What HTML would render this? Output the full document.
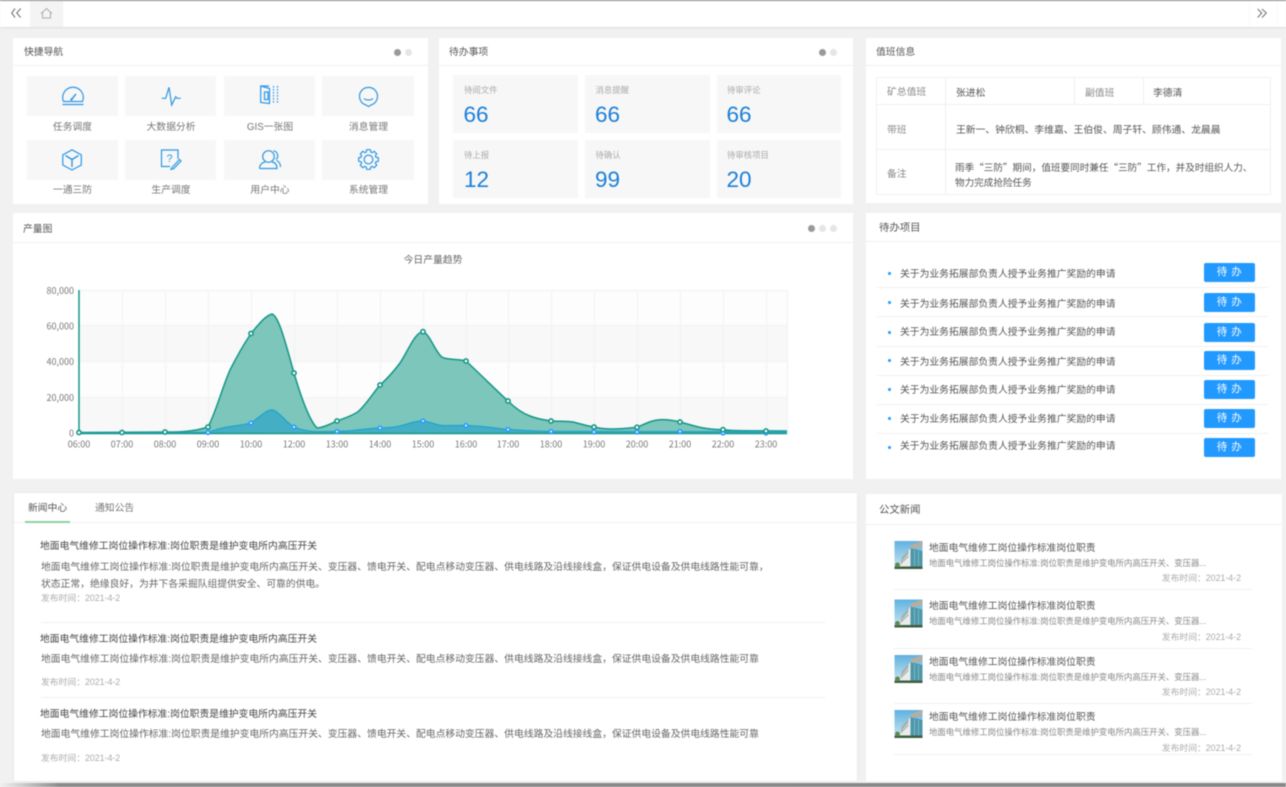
<!DOCTYPE html>
<html lang="zh-CN">
<head>
<meta charset="utf-8">
<title>Dashboard</title>
<style>
html,body{margin:0;padding:0;width:1286px;height:787px;overflow:hidden;background:#f1f1f1}
#root{position:absolute;left:0;top:0;width:1286px;height:787px;overflow:hidden;background:#f1f1f1;filter:blur(.5px);font-family:"Liberation Sans","Noto Sans CJK SC",sans-serif;color:#555}
.b{position:absolute;background:#fff}
.r{position:absolute;background:#f7f7f7}
.l{position:absolute;height:1px;background:#f0f0f0}
.t{position:absolute;white-space:nowrap;line-height:14px;height:14px;font-size:9.8px;color:#555;margin-top:2px}
.c{transform:translateX(-50%)}
.g{color:#aaa;font-size:8.8px;margin-top:0}
.d{position:absolute;width:7px;height:7px;border-radius:50%;background:#e5e5e5}
.d.on{background:#999}
.n{position:absolute;font-size:22.5px;line-height:28px;color:#1a7fd6;font-family:"Liberation Sans",sans-serif}
.btn{position:absolute;left:1204px;width:51px;height:19px;line-height:19px;background:#2299ff;border-radius:2px;color:#fff;text-align:center;font-size:10.5px;letter-spacing:.5px}
.dot{position:absolute;left:888px;width:3px;height:3px;border-radius:50%;background:#2299ff}
svg{position:absolute;left:0;top:0;overflow:visible}
</style>
</head>
<body>
<div id="root">

<!-- top bar -->
<div class="b" style="left:0;top:0;width:1286px;height:27px;box-shadow:0 1px 2px rgba(0,0,0,.08)"></div>
<div style="position:absolute;left:0;top:0;width:1286px;height:1px;background:#8a8a8a"></div>
<div style="position:absolute;left:30px;top:1px;width:33px;height:26px;background:#f4f4f4"></div>
<div style="position:absolute;left:1249px;top:1px;width:1px;height:26px;background:#f8f8f8"></div>
<div style="position:absolute;left:1277px;top:1px;width:1px;height:26px;background:#f8f8f8"></div>

<!-- cards -->
<div class="b" style="left:13px;top:38px;width:415px;height:166px"></div>
<div class="b" style="left:439px;top:38px;width:414px;height:166px"></div>
<div class="b" style="left:866px;top:38px;width:415px;height:165px"></div>
<div class="b" style="left:13px;top:213px;width:840px;height:266px"></div>
<div class="b" style="left:866px;top:213px;width:415px;height:266px"></div>
<div class="b" style="left:14px;top:493px;width:843px;height:288px;box-shadow:0 0 3px rgba(0,0,0,.06)"></div>
<div class="b" style="left:866px;top:494px;width:416px;height:287px"></div>

<!-- bottom strip -->
<div style="position:absolute;left:0;top:783px;width:1286px;height:4px;background:linear-gradient(90deg,#f1f1f1 0,#c8c8c8 25px,#8a8a8a 60px,#888 100%)"></div>

<!-- card headers -->
<div class="l" style="left:13px;top:65px;width:415px"></div>
<div class="l" style="left:439px;top:65px;width:414px"></div>
<div class="l" style="left:866px;top:65px;width:415px"></div>
<div class="l" style="left:13px;top:242px;width:840px"></div>
<div class="l" style="left:866px;top:241px;width:415px"></div>
<div class="l" style="left:14px;top:522px;width:843px"></div>
<div class="l" style="left:866px;top:524px;width:416px"></div>

<div class="t" style="left:24px;top:44px">快捷导航</div>
<div class="t" style="left:449px;top:44px">待办事项</div>
<div class="t" style="left:876px;top:44px">值班信息</div>
<div class="t" style="left:23px;top:221px">产量图</div>
<div class="t" style="left:879px;top:220px;font-size:10.4px">待办项目</div>
<div class="t" style="left:879px;top:502px;font-size:10.4px">公文新闻</div>

<div class="d on" style="left:394px;top:49px"></div><div class="d" style="left:405px;top:49px"></div>
<div class="d on" style="left:819px;top:49px"></div><div class="d" style="left:830px;top:49px"></div>
<div class="d on" style="left:808px;top:225px"></div><div class="d" style="left:819px;top:225px"></div><div class="d" style="left:830px;top:225px"></div>

<!-- nav tiles -->
<div class="r" style="left:27px;top:76px;width:91px;height:40px"></div>
<div class="r" style="left:125px;top:76px;width:91px;height:40px"></div>
<div class="r" style="left:224px;top:76px;width:91px;height:40px"></div>
<div class="r" style="left:322px;top:76px;width:92px;height:40px"></div>
<div class="r" style="left:27px;top:140px;width:91px;height:40px"></div>
<div class="r" style="left:125px;top:140px;width:91px;height:40px"></div>
<div class="r" style="left:224px;top:140px;width:91px;height:40px"></div>
<div class="r" style="left:322px;top:140px;width:92px;height:40px"></div>

<div class="t c" style="left:72.5px;top:119px;color:#777">任务调度</div>
<div class="t c" style="left:171px;top:119px;color:#777">大数据分析</div>
<div class="t c" style="left:270px;top:119px;color:#777">GIS一张图</div>
<div class="t c" style="left:368.5px;top:119px;color:#777">消息管理</div>
<div class="t c" style="left:72.5px;top:182px;color:#777">一通三防</div>
<div class="t c" style="left:171px;top:182px;color:#777">生产调度</div>
<div class="t c" style="left:270px;top:182px;color:#777">用户中心</div>
<div class="t c" style="left:368.5px;top:182px;color:#777">系统管理</div>

<!-- todo tiles -->
<div class="r" style="left:453px;top:75px;width:125px;height:58px"></div>
<div class="r" style="left:585px;top:75px;width:125px;height:58px"></div>
<div class="r" style="left:717px;top:75px;width:124px;height:58px"></div>
<div class="r" style="left:453px;top:140px;width:125px;height:58px"></div>
<div class="r" style="left:585px;top:140px;width:125px;height:58px"></div>
<div class="r" style="left:717px;top:140px;width:124px;height:58px"></div>

<div class="t g" style="left:464px;top:83px;font-size:8.4px">待阅文件</div><div class="n" style="left:463.5px;top:100.5px">66</div>
<div class="t g" style="left:595.5px;top:83px;font-size:8.4px">消息提醒</div><div class="n" style="left:595px;top:100.5px">66</div>
<div class="t g" style="left:727px;top:83px;font-size:8.4px">待审评论</div><div class="n" style="left:726.5px;top:100.5px">66</div>
<div class="t g" style="left:464px;top:148px;font-size:8.4px">待上报</div><div class="n" style="left:464px;top:165.5px">12</div>
<div class="t g" style="left:595.5px;top:148px;font-size:8.4px">待确认</div><div class="n" style="left:595px;top:165.5px">99</div>
<div class="t g" style="left:727px;top:148px;font-size:8.4px">待审核项目</div><div class="n" style="left:726.5px;top:165.5px">20</div>

<!-- duty table -->
<div style="position:absolute;left:876px;top:77px;width:393px;height:116px;border:1px solid #f0f0f0"></div>
<div class="l" style="left:876px;top:104px;width:394px"></div>
<div class="l" style="left:876px;top:149px;width:394px"></div>
<div style="position:absolute;left:945px;top:77px;width:1px;height:117px;background:#f0f0f0"></div>
<div style="position:absolute;left:1074px;top:77px;width:1px;height:27px;background:#f0f0f0"></div>
<div style="position:absolute;left:1143px;top:77px;width:1px;height:27px;background:#f0f0f0"></div>
<div class="t" style="left:887px;top:84px;color:#888">矿总值班</div>
<div class="t" style="left:956px;top:85px">张进松</div>
<div class="t" style="left:1085px;top:85px;color:#888">副值班</div>
<div class="t" style="left:1153px;top:85px">李德清</div>
<div class="t" style="left:887px;top:122px;color:#888">带班</div>
<div class="t" style="left:956px;top:122px">王新一、钟欣桐、李维嘉、王伯俊、周子轩、顾伟通、龙晨晨</div>
<div class="t" style="left:887px;top:166px;color:#888">备注</div>
<div class="t" style="left:955px;top:158px;font-size:9.6px;font-family:'Noto Sans CJK SC',sans-serif">雨季“三防”期间，值班要同时兼任“三防”工作，并及时组织人力、</div>
<div class="t" style="left:955px;top:175px;font-size:9.6px">物力完成抢险任务</div>

<!-- todo list -->
<div class="dot" style="top:272px"></div><div class="t" style="left:900px;top:266px">关于为业务拓展部负责人授予业务推广奖励的申请</div><div class="btn" style="top:263px">待 办</div>
<div class="l" style="left:877px;top:287px;width:391px"></div>
<div class="dot" style="top:301px"></div><div class="t" style="left:900px;top:296px">关于为业务拓展部负责人授予业务推广奖励的申请</div><div class="btn" style="top:293px">待 办</div>
<div class="l" style="left:877px;top:316px;width:391px"></div>
<div class="dot" style="top:331px"></div><div class="t" style="left:900px;top:324px">关于为业务拓展部负责人授予业务推广奖励的申请</div><div class="btn" style="top:323px">待 办</div>
<div class="l" style="left:877px;top:346px;width:391px"></div>
<div class="dot" style="top:359px"></div><div class="t" style="left:900px;top:354px">关于为业务拓展部负责人授予业务推广奖励的申请</div><div class="btn" style="top:351px">待 办</div>
<div class="l" style="left:877px;top:375px;width:391px"></div>
<div class="dot" style="top:388px"></div><div class="t" style="left:900px;top:382px">关于为业务拓展部负责人授予业务推广奖励的申请</div><div class="btn" style="top:380px">待 办</div>
<div class="l" style="left:877px;top:404px;width:391px"></div>
<div class="dot" style="top:417px"></div><div class="t" style="left:900px;top:411px">关于为业务拓展部负责人授予业务推广奖励的申请</div><div class="btn" style="top:409px">待 办</div>
<div class="l" style="left:877px;top:433px;width:391px"></div>
<div class="dot" style="top:446px"></div><div class="t" style="left:900px;top:438px">关于为业务拓展部负责人授予业务推广奖励的申请</div><div class="btn" style="top:438px">待 办</div>

<!-- left news -->
<div class="t" style="left:28px;top:500px">新闻中心</div>
<div class="t" style="left:95px;top:500px;color:#777">通知公告</div>
<div style="position:absolute;left:25px;top:521px;width:45px;height:2px;background:#8fd0a0"></div>

<div class="t" style="left:40px;top:538px;color:#444">地面电气维修工岗位操作标准:岗位职责是维护变电所内高压开关</div>
<div class="t" style="left:41px;top:559px;color:#666">地面电气维修工岗位操作标准:岗位职责是维护变电所内高压开关、变压器、馈电开关、配电点移动变压器、供电线路及沿线接线盒，保证供电设备及供电线路性能可靠，</div>
<div class="t" style="left:41px;top:576px;color:#666">状态正常，绝缘良好，为井下各采掘队组提供安全、可靠的供电。</div>
<div class="t g" style="left:41px;top:591px">发布时间：2021-4-2</div>
<div class="l" style="left:41px;top:622px;width:784px"></div>

<div class="t" style="left:40px;top:631px;color:#444">地面电气维修工岗位操作标准:岗位职责是维护变电所内高压开关</div>
<div class="t" style="left:41px;top:651px;color:#666">地面电气维修工岗位操作标准:岗位职责是维护变电所内高压开关、变压器、馈电开关、配电点移动变压器、供电线路及沿线接线盒，保证供电设备及供电线路性能可靠</div>
<div class="t g" style="left:41px;top:675px">发布时间：2021-4-2</div>
<div class="l" style="left:41px;top:697px;width:784px"></div>

<div class="t" style="left:40px;top:706px;color:#444">地面电气维修工岗位操作标准:岗位职责是维护变电所内高压开关</div>
<div class="t" style="left:41px;top:726px;color:#666">地面电气维修工岗位操作标准:岗位职责是维护变电所内高压开关、变压器、馈电开关、配电点移动变压器、供电线路及沿线接线盒，保证供电设备及供电线路性能可靠</div>
<div class="t g" style="left:41px;top:751px">发布时间：2021-4-2</div>

<!-- right news -->
<div class="t" style="left:929px;top:540px">地面电气维修工岗位操作标准岗位职责</div>
<div class="t" style="left:929px;top:554px;font-size:8.4px;color:#888">地面电气维修工岗位操作标准:岗位职责是维护变电所内高压开关、变压器...</div>
<div class="t g" style="right:45px;top:571px">发布时间：2021-4-2</div>
<div class="l" style="left:894px;top:589px;width:358px"></div>

<div class="t" style="left:929px;top:598px">地面电气维修工岗位操作标准岗位职责</div>
<div class="t" style="left:929px;top:612px;font-size:8.4px;color:#888">地面电气维修工岗位操作标准:岗位职责是维护变电所内高压开关、变压器...</div>
<div class="t g" style="right:45px;top:629.5px">发布时间：2021-4-2</div>
<div class="l" style="left:894px;top:648px;width:358px"></div>

<div class="t" style="left:929px;top:653.5px">地面电气维修工岗位操作标准岗位职责</div>
<div class="t" style="left:929px;top:668px;font-size:8.4px;color:#888">地面电气维修工岗位操作标准:岗位职责是维护变电所内高压开关、变压器...</div>
<div class="t g" style="right:45px;top:685px">发布时间：2021-4-2</div>
<div class="l" style="left:894px;top:703px;width:358px"></div>

<div class="t" style="left:929px;top:709px">地面电气维修工岗位操作标准岗位职责</div>
<div class="t" style="left:929px;top:723px;font-size:8.4px;color:#888">地面电气维修工岗位操作标准:岗位职责是维护变电所内高压开关、变压器...</div>
<div class="t g" style="right:45px;top:740.5px">发布时间：2021-4-2</div>
<div class="l" style="left:894px;top:754px;width:358px"></div>

<!-- icons, chart, thumbnails -->
<svg width="1286" height="787" viewBox="0 0 1286 787">
  <defs>
    <linearGradient id="sky" x1="0" y1="0" x2="0" y2="1"><stop offset="0" stop-color="#5fb2e0"/><stop offset="1" stop-color="#cfe8f2"/></linearGradient>
    <symbol id="bld" viewBox="0 0 28 28" overflow="hidden">
      <rect width="28" height="28" fill="url(#sky)"/>
      <polygon points="4,23 16,7 16,26 4,26" fill="#e8ecea"/>
      <path d="M6 21l8-9M6 23l8-8M7 18l7-8" stroke="#9aa8a4" stroke-width="1"/>
      <polygon points="16,7 28,10 28,26 16,26" fill="#4d97aa"/>
      <path d="M20 9v17M24 10v16" stroke="#7cb8c6" stroke-width="1"/>
      <polygon points="15,5 27,0 28,5 18,8" fill="#b8ae9e"/>
      <rect y="25.5" width="28" height="2.5" fill="#3f5c3f"/>
      <circle cx="3" cy="24" r="2.5" fill="#5a8a55"/>
    </symbol>
  </defs>

  <!-- toolbar icons -->
  <g fill="none" stroke="#777" stroke-width="1.1">
    <path d="M15 8.5L11.7 13 15 17.5M20.7 8.5L16.7 13 20.7 17.5"/>
    <path d="M1257.7 9L1261.7 13 1257.7 17.5M1262 9L1266.3 13 1262 17.5"/>
  </g>
  <path d="M41 13.5L46.5 8.5 52 13.5M42.5 12.5V18H50.5V12.5" fill="none" stroke="#aaa" stroke-width="1"/>

  <!-- nav icons -->
  <g fill="none" stroke="#2d97e3" stroke-width="1.2">
    <path d="M63.5 101.5A10.3 10.3 0 1 1 82.5 101.5Z"/>
    <path d="M62.5 104.5H83.5"/>
    <path d="M71.5 99.5L76 94" stroke-width="1.4"/>
    <path d="M161.7 98.3H165.7L169 87.3 171.7 105 175.7 96.7 177 98.3H180.7"/>
    <path d="M260.7 86L269.5 88.5V103.5L260.7 102.5Z"/>
    <path d="M261 86H269M264.5 92H268V99.5H264.5Z"/>
    <path d="M273.5 86V104M277.5 86V104" stroke-dasharray="1.6 1.4"/>
    <path d="M368.5 106.5L366 105A9 9 0 1 1 371 105Z"/>
    <path d="M364 98.5C366 100.5 371 100.5 373 98.5"/>
    <path d="M72 149.8L81.3 154.8V165L72 170 62.8 165V154.8Z"/>
    <path d="M65.5 155.5L72 159.5 78.5 155.5M72 159.5V167" stroke-width="1.4"/>
    <path d="M178 159V150H161.5V166.5H170"/>
    <path d="M172 167.5L179.5 159.5 181 161 173.5 168.8 171 169.3Z"/>
    <circle cx="268.5" cy="156.5" r="5.8"/>
    <path d="M259.5 168.5C259.5 164.5 262.5 162.5 265 162M272 162C275 162.5 277 164.5 277 168.5H259.5"/>
    <path d="M273.5 150.8A5 5 0 0 1 276 159.5M276.5 160.5C279 161.5 280.5 164 280.5 167"/>
    <g transform="translate(368.5 159.5)">
      <polygon stroke-linejoin="round" points="7.5,-2.15 9.82,-1.91 9.82,1.91 7.5,2.15 6.82,3.78 8.29,5.59 5.59,8.29 3.78,6.82 2.15,7.5 1.91,9.82 -1.91,9.82 -2.15,7.5 -3.78,6.82 -5.59,8.29 -8.29,5.59 -6.82,3.78 -7.5,2.15 -9.82,1.91 -9.82,-1.91 -7.5,-2.15 -6.82,-3.78 -8.29,-5.59 -5.59,-8.29 -3.78,-6.82 -2.15,-7.5 -1.91,-9.82 1.91,-9.82 2.15,-7.5 3.78,-6.82 5.59,-8.29 8.29,-5.59 6.82,-3.78"/>
      <circle r="4.4"/>
    </g>
  </g>
  <circle cx="71.5" cy="99.5" r="1.2" fill="#2d97e3"/>
  <text x="169.5" y="162" font-size="11" text-anchor="middle" fill="#2d97e3" font-family="Liberation Sans, sans-serif">?</text>

  <!-- chart -->
  <text x="433" y="263" font-size="9.8" text-anchor="middle" fill="#666" font-family="Liberation Sans, Noto Sans CJK SC, sans-serif">今日产量趋势</text>
  <rect x="79" y="290" width="708" height="35" fill="#fdfdfd"/>
  <rect x="79" y="325" width="708" height="36.5" fill="#f8f8f8"/>
  <rect x="79" y="361.5" width="708" height="36" fill="#fdfdfd"/>
  <rect x="79" y="397.5" width="708" height="35.5" fill="#f8f8f8"/>
  <g stroke="#f2f2f2" stroke-width="1" fill="none">
    <path d="M79 290.5H787M79 325.5H787M79 361.5H787M79 397.5H787"/>
    <path d="M122.5 290V433M165.5 290V433M208.5 290V433M251.5 290V433M294.5 290V433M337.5 290V433M380.5 290V433M423.5 290V433M466.5 290V433M508.5 290V433M551.5 290V433M594.5 290V433M637.5 290V433M680.5 290V433M723.5 290V433M766.5 290V433M787.5 290V433"/>
  </g>

  <path d="M79 432.5L165 432C180 432 195 431.5 208 427C216 412 222 388 230 370C237 356 244 344 251 333.5C259 324 265 316 272 314C279 316 286 345 294 373C301 397 309 420 317 428C323 428 330 424 337 421C345 418 352 416 358 411.7C366 405 373 393 380 385C388 378 394 371 400 363C408 351 415 332 423 331.7C430 334 436 354 443 357.7C449 360 459 359 466 361C480 374 495 389 508 401C515 408 522 413 530 416C537 419 544 420 551 421C559 421.5 566 421 573 422C581 424 587 426 594 427C601 429 607 429 613 429C622 429 630 428 637 427.3C645 424 652 420 660 419.7C667 419.5 674 420.5 680 422C688 424 695 426.5 702 427.7C709 429 716 429.5 723 429.7C730 430.5 737 430.7 743 430.7L787 431V433.5H79Z" fill="#7cc6bb"/>
  <path d="M79 432.5L165 432C180 432 195 431.5 208 427C216 412 222 388 230 370C237 356 244 344 251 333.5C259 324 265 316 272 314C279 316 286 345 294 373C301 397 309 420 317 428C323 428 330 424 337 421C345 418 352 416 358 411.7C366 405 373 393 380 385C388 378 394 371 400 363C408 351 415 332 423 331.7C430 334 436 354 443 357.7C449 360 459 359 466 361C480 374 495 389 508 401C515 408 522 413 530 416C537 419 544 420 551 421C559 421.5 566 421 573 422C581 424 587 426 594 427C601 429 607 429 613 429C622 429 630 428 637 427.3C645 424 652 420 660 419.7C667 419.5 674 420.5 680 422C688 424 695 426.5 702 427.7C709 429 716 429.5 723 429.7C730 430.5 737 430.7 743 430.7L787 431" fill="none" stroke="#149687" stroke-width="1.5"/>

  <path d="M79 433L208 432.5C215 430 222 427.5 230 426.7C237 425.5 244 425 251 423C259 418 265 410.5 272 410C279 411 286 423 294 427C301 430 309 431.5 317 431.7L337 431.5C345 431.3 352 431 358 430C366 429 373 428.5 380 428C388 427.7 394 427.5 400 426C408 424 415 421 423 421C430 422 436 425 443 425.7L466 425.5C472 426 478 426.3 483 426.7C492 427.5 500 429 508 429.5C522 430.5 537 431.5 551 431.5L787 431.8V433.5H79Z" fill="#44afc4"/>
  <path d="M79 433L208 432.5C215 430 222 427.5 230 426.7C237 425.5 244 425 251 423C259 418 265 410.5 272 410C279 411 286 423 294 427C301 430 309 431.5 317 431.7L337 431.5C345 431.3 352 431 358 430C366 429 373 428.5 380 428C388 427.7 394 427.5 400 426C408 424 415 421 423 421C430 422 436 425 443 425.7L466 425.5C472 426 478 426.3 483 426.7C492 427.5 500 429 508 429.5C522 430.5 537 431.5 551 431.5L787 431.8" fill="none" stroke="#25a5cb" stroke-width="1.4"/>

  <path d="M79 290V433.5H787" fill="none" stroke="#149687" stroke-width="1.5"/>

  <g fill="#fff" stroke="#2a9bff" stroke-width="1.6">
    <circle cx="208" cy="432.5" r="1.8"/><circle cx="251" cy="423" r="1.8"/><circle cx="294" cy="427" r="1.8"/><circle cx="337" cy="431.5" r="1.8"/><circle cx="380" cy="428" r="1.8"/><circle cx="423" cy="421" r="1.8"/><circle cx="466" cy="425.5" r="1.8"/><circle cx="508" cy="429.5" r="1.8"/><circle cx="551" cy="431.5" r="1.8"/><circle cx="594" cy="432" r="1.8"/><circle cx="637" cy="432" r="1.8"/><circle cx="680" cy="431.5" r="1.8"/><circle cx="723" cy="433" r="1.8"/><circle cx="766" cy="433" r="1.8"/>
  </g>
  <g fill="#fff" stroke="#149687" stroke-width="1.6">
    <circle cx="79" cy="432.5" r="2.1"/><circle cx="122" cy="432.5" r="2.1"/><circle cx="165" cy="432" r="2.1"/><circle cx="208" cy="427" r="2.1"/><circle cx="251" cy="333.5" r="2.1"/><circle cx="294" cy="373" r="2.1"/><circle cx="337" cy="421" r="2.1"/><circle cx="380" cy="385" r="2.1"/><circle cx="423" cy="331.7" r="2.1"/><circle cx="466" cy="361" r="2.1"/><circle cx="508" cy="401" r="2.1"/><circle cx="551" cy="421" r="2.1"/><circle cx="594" cy="427" r="2.1"/><circle cx="637" cy="427.3" r="2.1"/><circle cx="680" cy="422" r="2.1"/><circle cx="723" cy="429.7" r="2.1"/><circle cx="766" cy="431" r="2.1"/>
  </g>

  <g font-size="9" fill="#777" font-family="Noto Sans CJK SC, sans-serif">
    <g text-anchor="end">
      <text x="74" y="294">80,000</text><text x="74" y="329.5">60,000</text><text x="74" y="365">40,000</text><text x="74" y="401">20,000</text><text x="74" y="436.5">0</text>
    </g>
    <g text-anchor="middle">
      <text x="79" y="447.5">06:00</text><text x="122" y="447.5">07:00</text><text x="165" y="447.5">08:00</text><text x="208" y="447.5">09:00</text><text x="251" y="447.5">10:00</text><text x="294" y="447.5">12:00</text><text x="337" y="447.5">13:00</text><text x="380" y="447.5">14:00</text><text x="423" y="447.5">15:00</text><text x="466" y="447.5">16:00</text><text x="508" y="447.5">17:00</text><text x="551" y="447.5">18:00</text><text x="594" y="447.5">19:00</text><text x="637" y="447.5">20:00</text><text x="680" y="447.5">21:00</text><text x="723" y="447.5">22:00</text><text x="766" y="447.5">23:00</text>
    </g>
  </g>

  <!-- thumbnails -->
  <use href="#bld" x="894.5" y="541" width="28" height="28"/>
  <use href="#bld" x="894.5" y="599.5" width="28" height="28"/>
  <use href="#bld" x="894.5" y="655" width="28" height="28"/>
  <use href="#bld" x="894.5" y="710" width="28" height="28"/>
</svg>

</div>
</body>
</html>
